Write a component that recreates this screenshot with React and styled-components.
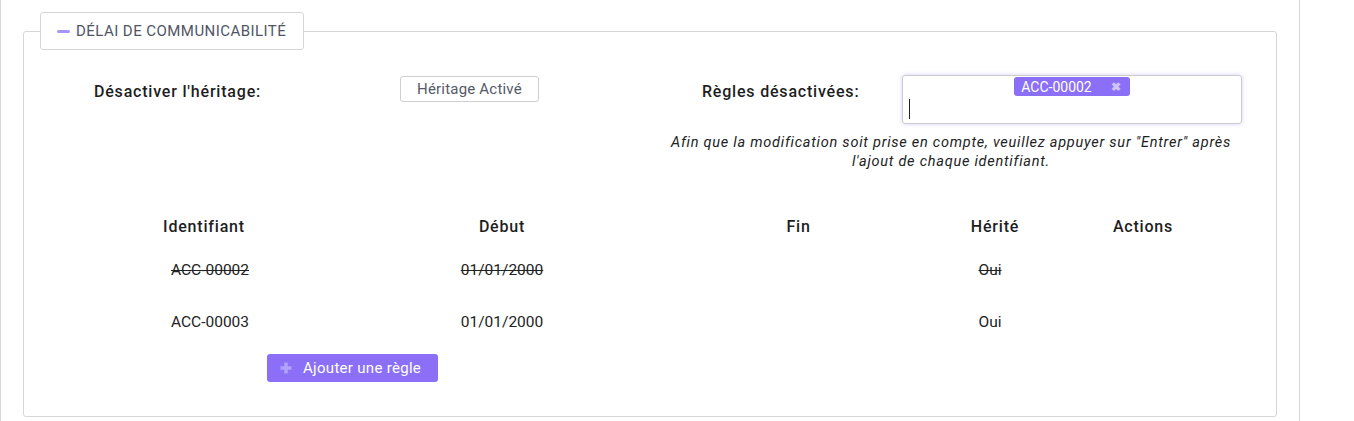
import styled, { createGlobalStyle } from 'styled-components';

const GlobalStyle = createGlobalStyle`
  html, body {
    margin: 0;
    padding: 0;
    background: #ffffff;
    font-family: Roboto, "Noto Sans", sans-serif;
    color: #222222;
  }
`;

const PURPLE = '#8b70f7';

const rules = [
  { id: 'ACC-00002', start: '01/01/2000', end: '', inherited: 'Oui', disabled: true },
  { id: 'ACC-00003', start: '01/01/2000', end: '', inherited: 'Oui', disabled: false }
];

const App = () => {
  return (
    <>
      <GlobalStyle />
      <Page>
        <Panel>
          <Section>
            <Legend>
              <Dash />
              Délai de communicabilité
            </Legend>

            <TopGrid>
              <FieldLabel $indent={54}>Désactiver l'héritage:</FieldLabel>
              <div>
                <ToggleButton type="button">Héritage Activé</ToggleButton>
              </div>
              <FieldLabel $indent={42}>Règles désactivées:</FieldLabel>
              <TagInput>
                <Chip>
                  ACC-00002
                  <ChipClose>✖</ChipClose>
                </Chip>
                <Caret />
              </TagInput>
              <Note>
                Afin que la modification soit prise en compte, veuillez appuyer sur "Entrer" après
                <br />
                l'ajout de chaque identifiant.
              </Note>
            </TopGrid>

            <Table>
              <HeadCell>Identifiant</HeadCell>
              <HeadCell>Début</HeadCell>
              <HeadCell>Fin</HeadCell>
              <HeadCell>Hérité</HeadCell>
              <HeadCell>Actions</HeadCell>
              {rules.map((rule) => (
                <Row key={rule.id}>
                  <Cell $struck={rule.disabled} $shift={6}>{rule.id}</Cell>
                  <Cell $struck={rule.disabled}>{rule.start}</Cell>
                  <Cell $struck={rule.disabled}>{rule.end}</Cell>
                  <Cell $struck={rule.disabled} $shift={-5}>{rule.inherited}</Cell>
                  <Cell />
                </Row>
              ))}
            </Table>

            <AddButton type="button">
              <PlusIcon viewBox="0 0 12 12">
                <path d="M6 0.5v11M0.5 6h11" stroke="currentColor" strokeWidth="3.4" />
              </PlusIcon>
              Ajouter une règle
            </AddButton>
          </Section>
        </Panel>
      </Page>
    </>
  );
};

const Page = styled.div`
  height: 421px;
  overflow: hidden;
`;

const Panel = styled.div`
  width: 1300px;
  height: 421px;
  box-sizing: border-box;
  border-left: 1px solid #d8d8d8;
  border-right: 1px solid #d8d8d8;
  padding: 12px 22px 0 22px;
`;

const Section = styled.fieldset`
  margin: 0;
  padding: 0 16px 34px 16px;
  border: 1px solid #d6d6d6;
  border-radius: 3px;
  min-width: 0;
`;

const Legend = styled.legend`
  display: flex;
  align-items: center;
  gap: 6px;
  padding: 9px 17px 9px 16px;
  border: 1px solid #d6d6d6;
  border-radius: 3px;
  background: #ffffff;
  font-size: 15px;
  line-height: 18px;
  letter-spacing: 0.45px;
  text-transform: uppercase;
  color: #505566;
`;

const Dash = styled.span`
  display: inline-block;
  width: 13px;
  height: 3px;
  border-radius: 2px;
  background: #a695fa;
`;

const TopGrid = styled.div`
  display: grid;
  grid-template-columns: 360px 260px 242px 340px;
  margin-top: 25px;
`;

const FieldLabel = styled.div`
  padding-left: ${(p) => p.$indent}px;
  padding-top: 7px;
  font-size: 16px;
  line-height: 19px;
  font-weight: 500;
  letter-spacing: 0.8px;
  color: #1e1e1e;
`;

const ToggleButton = styled.button`
  margin-top: 1px;
  height: 26px;
  padding: 0 16px;
  border: 1px solid #cfcfcf;
  border-radius: 3px;
  background: #ffffff;
  font-family: Roboto, "Noto Sans", sans-serif;
  font-size: 15px;
  letter-spacing: 0.2px;
  color: #555a66;
`;

const TagInput = styled.div`
  box-sizing: border-box;
  height: 49px;
  border: 1px solid #cccccc;
  border-radius: 3px;
  box-shadow: 0 0 4px rgba(139, 112, 247, 0.35);
  display: flex;
  flex-direction: column;
  align-items: center;
  padding: 1px 6px 0 6px;
`;

const Chip = styled.span`
  display: inline-flex;
  align-items: center;
  gap: 19px;
  height: 19px;
  padding: 0 9px 0 7px;
  border-radius: 3px;
  background: ${PURPLE};
  color: #ffffff;
  font-size: 14px;
`;

const ChipClose = styled.span`
  font-size: 12px;
  font-weight: 700;
  color: #cfc5fb;
`;

const Caret = styled.span`
  align-self: flex-start;
  margin-top: 3px;
  width: 1px;
  height: 20px;
  background: #222222;
`;

const Note = styled.p`
  grid-column: 3 / span 2;
  margin: 9px 0 0 0;
  text-align: center;
  font-size: 14.5px;
  line-height: 19px;
  letter-spacing: 0.75px;
  font-style: italic;
  color: #222222;
`;

const Table = styled.div`
  display: grid;
  grid-template-columns: 298px 298px 295px 98px 198px;
  margin: 33px 0 0 15px;
`;

const HeadCell = styled.div`
  height: 40px;
  padding-top: 4px;
  box-sizing: border-box;
  display: flex;
  align-items: center;
  justify-content: center;
  font-size: 16px;
  font-weight: 500;
  letter-spacing: 0.8px;
  color: #1e1e1e;
`;

const Row = styled.div`
  display: contents;
`;

const Cell = styled.div`
  height: 52px;
  display: flex;
  align-items: center;
  justify-content: center;
  font-size: 15.5px;
  color: #222222;
  transform: translateX(${(p) => p.$shift || 0}px);
  text-decoration: ${(p) => (p.$struck ? 'line-through' : 'none')};
`;

const AddButton = styled.button`
  display: flex;
  align-items: center;
  gap: 11px;
  margin: 6px 0 0 227px;
  height: 28px;
  padding: 0 17px 0 13px;
  border: none;
  border-radius: 3px;
  background: ${PURPLE};
  color: #ffffff;
  font-family: Roboto, "Noto Sans", sans-serif;
  font-size: 15px;
  letter-spacing: 0.3px;
`;

const PlusIcon = styled.svg`
  width: 12px;
  height: 12px;
  color: #b4a3fb;
`;

export default App;
